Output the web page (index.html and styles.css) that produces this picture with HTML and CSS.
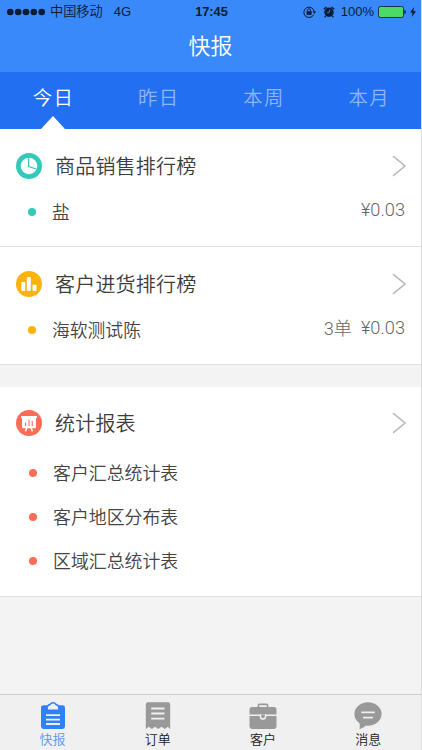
FILE: index.html
```html
<!DOCTYPE html>
<html lang="zh-CN">
<head>
    <meta charset="UTF-8">
    <meta name="viewport" content="width=device-width, initial-scale=1.0">
    <title>快报</title>
    <link rel="stylesheet" href="styles.css">
</head>

<body>
<div class="app">

    <header class="header">
        <div class="status-bar">
            <div class="status-left">
                <svg class="signal" width="38" height="8" viewBox="0 0 38 8">
                    <circle cx="3.3" cy="4" r="3.3"/>
                    <circle cx="11.2" cy="4" r="3.3"/>
                    <circle cx="19" cy="4" r="3.3"/>
                    <circle cx="26.8" cy="4" r="3.3"/>
                    <circle cx="34.7" cy="4" r="3.3"/>
                </svg>
                <span class="carrier">中国移动</span>
                <span class="network">4G</span>
            </div>
            <span class="time">17:45</span>
            <div class="status-right">
                <svg class="lock" width="14" height="12" viewBox="0 0 14 12">
                    <path d="M10.8 8.5A5.2 5.2 0 1 1 11.2 5.5" fill="none" stroke="#0b1b33" stroke-width="1"/>
                    <path d="M9.4 5.4h3.8l-1.9 2.4z"/>
                    <rect x="3.6" y="5.2" width="5" height="3.6"/>
                    <path d="M4.6 5.3V4.2a1.5 1.5 0 0 1 3 0v1.1" fill="none" stroke="#0b1b33" stroke-width="0.9"/>
                </svg>
                <svg class="alarm" width="12" height="12" viewBox="0 0 12 12">
                    <circle cx="6" cy="6.3" r="4.7"/>
                    <path d="M0.8 3.2L3.4 0.9M11.2 3.2L8.6 0.9M2.7 10L1.7 11.3M9.3 10l1 1.3" fill="none" stroke="#0b1b33" stroke-width="1.4"/>
                    <path d="M6.8 3.5L6 6.6H4.2" fill="none" stroke="#3a89fa" stroke-width="0.9"/>
                </svg>
                <span class="percent">100%</span>
                <svg class="battery" width="28" height="12" viewBox="0 0 28 12">
                    <rect x="0.5" y="0.5" width="25" height="11" rx="1.8" fill="#4cd964" stroke="#12315c"/>
                    <path d="M26.4 3.8q1.5 0.6 1.5 2.2t-1.5 2.2z"/>
                </svg>
                <svg class="bolt" width="6" height="10" viewBox="0 0 6 10">
                    <path d="M4.1 0L0 5.6h2.5L1.7 10L6 4.2H3.4z"/>
                </svg>
            </div>
        </div>
        <h1 class="title">快报</h1>
    </header>

    <nav class="tabs">
        <a class="tab active">今日</a>
        <a class="tab">昨日</a>
        <a class="tab">本周</a>
        <a class="tab">本月</a>
    </nav>

    <main>
        <section class="card">
            <div class="card-head">
                <svg class="card-icon" width="26" height="26" viewBox="0 0 26 26">
                    <circle cx="13" cy="13" r="13" fill="#33c9bb"/>
                    <circle cx="13" cy="13" r="8.3" fill="#fff"/>
                    <path d="M12.6 4.5V13.6L20.5 16" fill="none" stroke="#33c9bb" stroke-width="1.3"/>
                </svg>
                <h2>商品销售排行榜</h2>
                <svg class="arrow" width="14" height="22" viewBox="0 0 14 22">
                    <path d="M1 1.2L13 11L1 20.8"/>
                </svg>
            </div>
            <div class="card-row">
                <i class="dot teal"></i>
                <span class="name">盐</span>
                <span class="money">¥0.03</span>
            </div>
        </section>

        <section class="card">
            <div class="card-head">
                <svg class="card-icon" width="26" height="26" viewBox="0 0 26 26">
                    <circle cx="13" cy="13" r="13" fill="#ffb20a"/>
                    <rect x="5.3" y="11" width="3.9" height="9" rx="1" fill="#fff"/>
                    <rect x="10.8" y="6" width="4" height="14" rx="1" fill="#fff"/>
                    <rect x="16.5" y="13.7" width="4" height="6.3" rx="1" fill="#fff"/>
                </svg>
                <h2>客户进货排行榜</h2>
                <svg class="arrow" width="14" height="22" viewBox="0 0 14 22">
                    <path d="M1 1.2L13 11L1 20.8"/>
                </svg>
            </div>
            <div class="card-row">
                <i class="dot yellow"></i>
                <span class="name">海软测试陈</span>
                <span class="count">3单</span>
                <span class="money">¥0.03</span>
            </div>
        </section>

        <section class="card report">
            <div class="card-head">
                <svg class="card-icon" width="26" height="26" viewBox="0 0 26 26">
                    <circle cx="13" cy="13" r="13" fill="#ff6c55"/>
                    <path d="M5 6h16v2h-1v9.2q0 1-1 1H7q-1 0-1-1V8H5z" fill="#fff"/>
                    <path d="M10.8 18L9.4 21.4M15 18l1.5 3.4" fill="none" stroke="#fff" stroke-width="1.5"/>
                    <path d="M9.6 12.6V16M13 9.4V16M16.2 11V16" fill="none" stroke="#ff6c55" stroke-width="1.1"/>
                </svg>
                <h2>统计报表</h2>
                <svg class="arrow" width="14" height="22" viewBox="0 0 14 22">
                    <path d="M1 1.2L13 11L1 20.8"/>
                </svg>
            </div>
            <ul class="report-list">
                <li><i class="dot red"></i>客户汇总统计表</li>
                <li><i class="dot red"></i>客户地区分布表</li>
                <li><i class="dot red"></i>区域汇总统计表</li>
            </ul>
        </section>
    </main>

    <footer class="tab-bar">
        <a class="bar-item active">
            <svg width="28" height="28" viewBox="0 0 28 28">
                <path d="M4.5 3.3H23.5Q26 3.3 26 5.8V24.6Q26 27 23.5 27H4.5Q2 27 2 24.6V5.8Q2 3.3 4.5 3.3z"/>
                <path d="M8 4.5Q8.4 2 10.6 1.8Q11.6 0 14 0T17.4 1.8Q19.6 2 20 4.5z"/>
                <path d="M9 7.4Q8.4 3.9 11.4 3.3Q12 1.5 14 1.5T16.6 3.3Q19.6 3.9 19 7.4z" fill="#f0f0f0"/>
                <path d="M7 13.1H21M7 17.6H21M7 22H21" stroke="#f0f0f0" stroke-width="1.8"/>
            </svg>
            <span>快报</span>
        </a>
        <a class="bar-item">
            <svg width="28" height="28" viewBox="0 0 28 28">
                <path d="M4 0.3H24Q26.2 0.3 26.2 2.6V27L23.8 24.8L20.8 27L17.5 24.8L14.3 27L11 24.8L7.9 27L4.8 24.8L1.8 27V2.6Q1.8 0.3 4 0.3z"/>
                <path d="M7.2 6.5H20.5M7.2 11.5H20.5M7.2 16.6H20.5" stroke="#f0f0f0" stroke-width="1.8"/>
            </svg>
            <span>订单</span>
        </a>
        <a class="bar-item">
            <svg width="28" height="28" viewBox="0 0 28 28">
                <path d="M9.4 5.5V3.4Q9.4 2.3 10.5 2.3H17.5Q18.6 2.3 18.6 3.4V5.5" fill="none" stroke="#999" stroke-width="1.7"/>
                <path d="M3 5H25Q27.5 5 27.5 7.5V12.4H0.5V7.5Q0.5 5 3 5z"/>
                <path d="M0.5 14H27.5V24.6Q27.5 27 25 27H3Q0.5 27 0.5 24.6z"/>
                <path d="M10.7 12.4H17.3V14.6A3.3 3.3 0 0 1 10.7 14.6z" fill="#f0f0f0"/>
                <path d="M12.2 12.4H15.8V14.5A1.8 1.8 0 0 1 12.2 14.5z"/>
            </svg>
            <span>客户</span>
        </a>
        <a class="bar-item">
            <svg width="28" height="28" viewBox="0 0 28 28">
                <path d="M14 0.3C21.6 0.3 27.6 5.6 27.6 12S21.6 23.8 14 23.8Q13 23.8 12.2 23.6Q9 26.2 5.5 27.2Q6.2 24.5 5.5 21.2Q0.4 17.8 0.4 12C0.4 5.6 6.4 0.3 14 0.3z"/>
                <path d="M7.3 10.3H20.7M9 15.7H18.9" stroke="#f0f0f0" stroke-width="1.7"/>
            </svg>
            <span>消息</span>
        </a>
    </footer>

</div>
</body>
</html>
```
FILE: styles.css
```css
* {
    margin: 0;
    padding: 0;
    box-sizing: border-box;
}

body {
    background-color: #f3f3f3;
    color: #444;
    font-family: "Liberation Sans", "Noto Sans CJK SC", sans-serif;
    font-weight: 350;
}

.app {
    height: 750px;
    display: flex;
    flex-direction: column;
    border-right: 1px solid #dcdcdc;
}

/* Header */
.header {
    height: 72px;
    background-color: #3a89fa;
}

.status-bar {
    height: 24px;
    display: grid;
    grid-template-columns: 1fr auto 1fr;
    align-items: center;
    padding: 0 5px 0 7px;
    font-size: 13px;
    line-height: 24px;
    color: #0b1b33;
    fill: #0b1b33;
}

.status-left,
.status-right {
    display: flex;
    align-items: center;
}

.status-right {
    justify-content: flex-end;
}

.carrier {
    margin-left: 5px;
    font-size: 13.2px;
}

.network {
    margin-left: 11px;
}

.time {
    font-weight: bold;
    font-size: 12.8px;
}

.alarm {
    margin-left: 6px;
}

.percent {
    margin: 0 4px 0 6px;
}

.bolt {
    margin-left: 4px;
}

.title {
    height: 46px;
    line-height: 46px;
    font-size: 22px;
    font-weight: 350;
    text-align: center;
    color: #fff;
}

/* Tabs */
.tabs {
    height: 57px;
    display: flex;
    background-color: #226ff2;
}

.tab {
    flex: 1;
    position: relative;
    padding-left: 2px;
    line-height: 52px;
    font-size: 19.4px;
    letter-spacing: 1.6px;
    text-align: center;
    color: #8fb6fa;
}

.tab.active {
    color: #fff;
}

.tab.active::after {
    content: "";
    position: absolute;
    left: 50%;
    bottom: 0;
    margin-left: -12px;
    border: 12px solid transparent;
    border-top: 0;
    border-bottom: 13px solid #fff;
}

/* Cards */
.card {
    height: 118px;
    padding: 14px 16px 0;
    background-color: #fff;
    border-bottom: 1px solid #e0e0e0;
}

.card-head {
    height: 46px;
    display: flex;
    align-items: center;
}

.card-head h2 {
    flex: 1;
    margin: 0 0 2px 13px;
    font-size: 20px;
    font-weight: 350;
    letter-spacing: 0.2px;
    color: #3c3c3c;
}

.arrow {
    margin-right: -1px;
    fill: none;
    stroke: #bbb;
    stroke-width: 1.6;
}

.card-row {
    height: 44px;
    display: flex;
    align-items: center;
    padding-left: 12px;
    font-size: 17.8px;
}

.dot {
    width: 8px;
    height: 8px;
    margin-top: 2px;
    border-radius: 50%;
}

.teal {
    background-color: #33c9bb;
}

.yellow {
    background-color: #ffb20a;
}

.red {
    background-color: #ff6c55;
}

.name {
    flex: 1;
    margin-left: 16px;
}

.money,
.count {
    margin: 0 0 4px 9px;
    font-family: Roboto, "Noto Sans CJK SC", sans-serif;
    font-weight: 300;
    font-size: 18.2px;
    color: #666;
}

.report {
    height: 210px;
    margin-top: 22px;
    padding-top: 13px;
}

.report-list {
    list-style: none;
    padding: 4px 0 0 13px;
}

.report-list li {
    height: 44px;
    display: flex;
    align-items: center;
    gap: 16px;
    font-size: 17.9px;
}

/* Bottom bar */
.tab-bar {
    height: 56px;
    margin-top: auto;
    display: flex;
    background-color: #f0f0f0;
    border-top: 1px solid #ccc;
}

.bar-item {
    flex: 1;
    display: flex;
    flex-direction: column;
    align-items: center;
    padding-top: 7px;
    font-size: 13px;
    line-height: 20px;
    color: #222;
    fill: #999;
}

.bar-item svg {
    flex-shrink: 0;
}

.bar-item.active {
    color: #5b97f0;
    fill: #3080fa;
}
```
